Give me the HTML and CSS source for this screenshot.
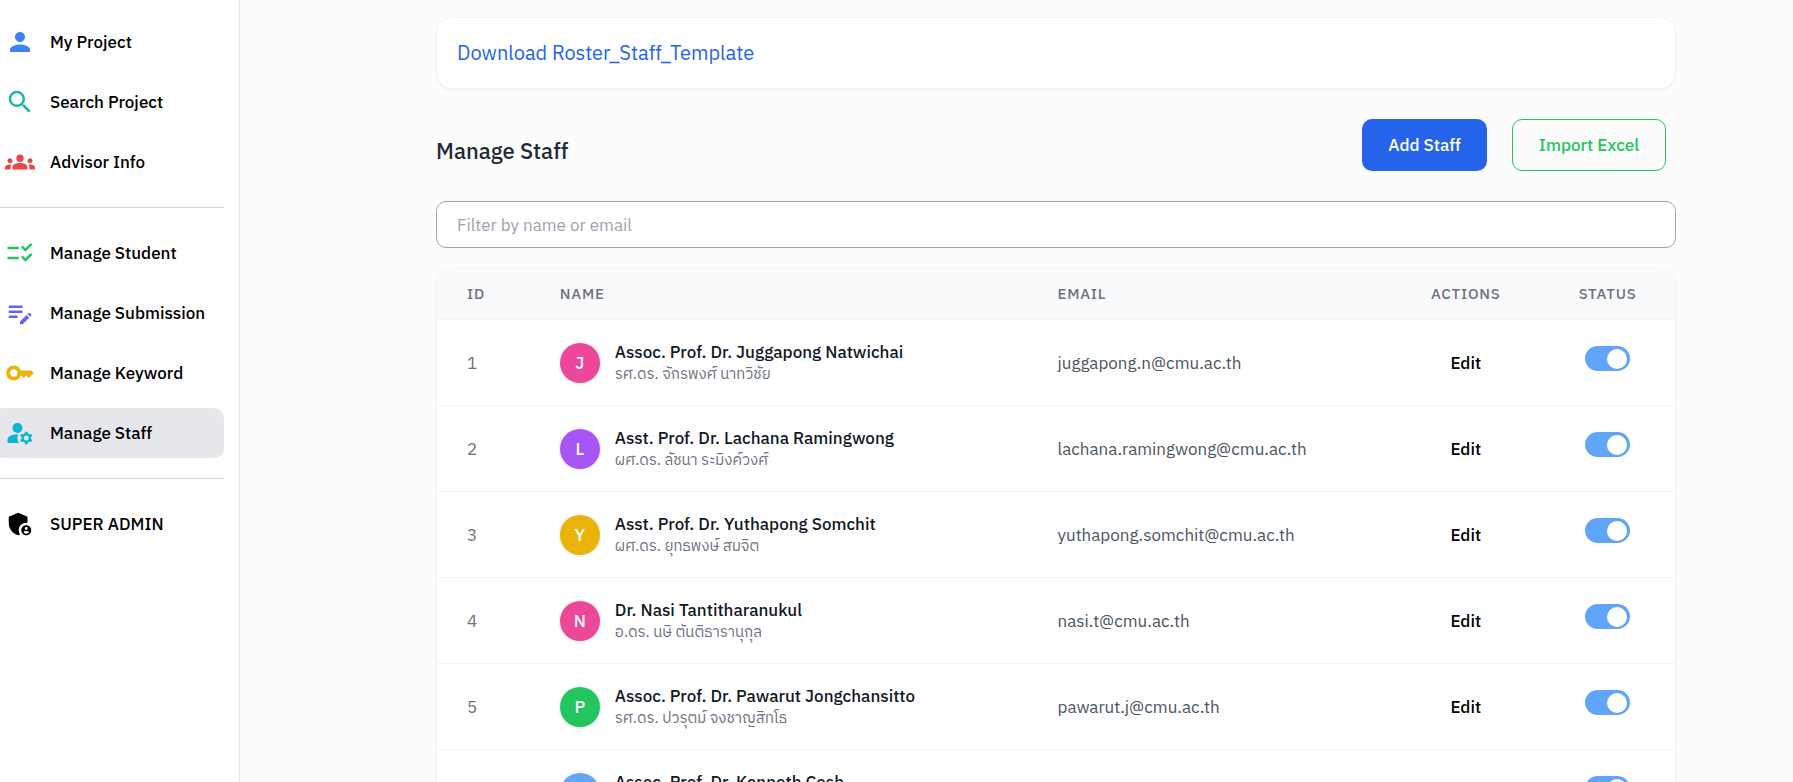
FILE: index.html
```html
<!DOCTYPE html>
<html lang="en">
<head>
<meta charset="utf-8">
<title>Manage Staff</title>
<meta name="viewport" content="width=device-width, initial-scale=1">
<link rel="stylesheet" href="styles.css">
</head>
<body>
<div class="app">
  <nav class="sidebar">
    <a class="nav-item" href="#"><svg class="icon blue" viewBox="0 0 24 24"><path d="M12 12c2.21 0 4-1.79 4-4s-1.79-4-4-4-4 1.79-4 4 1.79 4 4 4zm0 2c-2.67 0-8 1.34-8 4v2h16v-2c0-2.66-5.33-4-8-4z"/></svg>My Project</a>
    <a class="nav-item" href="#"><svg class="icon teal" viewBox="0 0 24 24"><path d="M15.5 14h-.79l-.28-.27A6.471 6.471 0 0 0 16 9.5 6.5 6.5 0 1 0 9.5 16c1.61 0 3.09-.59 4.23-1.57l.27.28v.79l5 4.99L20.49 19l-4.99-5zm-6 0C7.01 14 5 11.99 5 9.5S7.01 5 9.5 5 14 7.01 14 9.5 11.99 14 9.5 14z"/></svg>Search Project</a>
    <a class="nav-item" href="#"><svg class="icon red" viewBox="0 0 24 24"><path d="M12 12.75c1.63 0 3.07.39 4.24.9 1.08.48 1.76 1.56 1.76 2.73V18H6v-1.61c0-1.18.68-2.26 1.76-2.73 1.17-.52 2.61-.91 4.24-.91zM4 13c1.1 0 2-.9 2-2s-.9-2-2-2-2 .9-2 2 .9 2 2 2zm1.13 1.1c-.37-.06-.74-.1-1.13-.1-.99 0-1.93.21-2.78.58A2.01 2.01 0 0 0 0 16.43V18h4.5v-1.61c0-.83.23-1.61.63-2.29zM20 13c1.1 0 2-.9 2-2s-.9-2-2-2-2 .9-2 2 .9 2 2 2zm4 3.43c0-.81-.48-1.53-1.22-1.85A6.95 6.95 0 0 0 20 14c-.39 0-.76.04-1.13.1.4.68.63 1.46.63 2.29V18H24v-1.57zM12 6c1.66 0 3 1.34 3 3s-1.34 3-3 3-3-1.34-3-3 1.34-3 3-3z"/></svg>Advisor Info</a>
    <hr class="divider">
    <a class="nav-item" href="#"><svg class="icon green" viewBox="0 0 24 24"><path d="M11 7H2v2h9V7zm0 8H2v2h9v-2zM16.34 11l-3.54-3.54 1.41-1.41 2.12 2.12 4.24-4.24L22 5.34 16.34 11zm0 8l-3.54-3.54 1.41-1.41 2.12 2.12 4.24-4.24L22 13.34 16.34 19z"/></svg>Manage Student</a>
    <a class="nav-item" href="#"><svg class="icon indigo" viewBox="0 0 24 24"><path d="M3 10h11v2H3v-2zm0-2h11V6H3v2zm0 8h7v-2H3v2zm15.01-3.13.71-.71a.996.996 0 0 1 1.41 0l.71.71c.39.39.39 1.02 0 1.41l-.71.71-2.12-2.12zm-.71.71-5.3 5.3V21h2.12l5.3-5.3-2.12-2.12z"/></svg>Manage Submission</a>
    <a class="nav-item" href="#"><svg class="icon yellow" viewBox="0 0 24 24"><path d="M21 10h-8.35A5.99 5.99 0 0 0 7 6c-3.31 0-6 2.69-6 6s2.69 6 6 6a5.99 5.99 0 0 0 5.65-4H13l2 2 2-2 2 2 4-4.04L21 10zM7 15c-1.65 0-3-1.35-3-3s1.35-3 3-3 3 1.35 3 3-1.35 3-3 3z"/></svg>Manage Keyword</a>
    <a class="nav-item active" href="#" aria-current="page"><svg class="icon cyan" viewBox="0 0 24 24"><circle cx="10" cy="8" r="4"/><path d="M10.67 13.02c-.22-.01-.44-.02-.67-.02-2.42 0-4.68.67-6.61 1.82-.88.52-1.39 1.5-1.39 2.53V20h9.26a6.963 6.963 0 0 1-.59-6.98z"/><path d="M20.75 16c0-.22-.03-.42-.06-.63l1.14-1.01-1-1.73-1.45.49c-.32-.27-.68-.48-1.08-.63L18 11h-2l-.3 1.49c-.4.15-.76.36-1.08.63l-1.45-.49-1 1.73 1.14 1.01c-.03.21-.06.41-.06.63s.03.42.06.63l-1.14 1.01 1 1.73 1.45-.49c.32.27.68.48 1.08.63L16 21h2l.3-1.49c.4-.15.76-.36 1.08-.63l1.45.49 1-1.73-1.14-1.01c.03-.21.06-.41.06-.63zM17 18c-1.1 0-2-.9-2-2s.9-2 2-2 2 .9 2 2-.9 2-2 2z"/></svg>Manage Staff</a>
    <hr class="divider">
    <a class="nav-item" href="#"><svg class="icon" viewBox="0 0 24 24"><path d="M17 11c.34 0 .67.04 1 .09V6.27L10.5 3 3 6.27v4.91c0 4.54 3.2 8.79 7.5 9.82.55-.13 1.08-.32 1.6-.55A5.973 5.973 0 0 1 11 17c0-3.31 2.69-6 6-6z"/><path d="M17 13c-2.21 0-4 1.79-4 4s1.79 4 4 4 4-1.79 4-4-1.79-4-4-4zm0 1.38c.62 0 1.12.51 1.12 1.12s-.51 1.12-1.12 1.12-1.12-.51-1.12-1.12.5-1.12 1.12-1.12zm0 5.37c-.93 0-1.74-.46-2.24-1.17.05-.72 1.51-1.08 2.24-1.08s2.19.36 2.24 1.08c-.5.71-1.31 1.17-2.24 1.17z"/></svg>SUPER ADMIN</a>
  </nav>

  <main class="content">
    <section class="download-card"><a class="download-link" href="#">Download Roster_Staff_Template</a></section>

    <header class="toolbar">
      <h1 class="title">Manage Staff</h1>
      <div class="actions">
        <button class="btn btn-primary" type="button">Add Staff</button>
        <button class="btn btn-outline" type="button">Import Excel</button>
      </div>
    </header>

    <input class="filter" type="text" placeholder="Filter by name or email" aria-label="Filter by name or email">

    <div class="table-card">
      <table class="staff">
        <colgroup><col class="col-id"><col class="col-name"><col class="col-email"><col class="col-actions"><col class="col-status"></colgroup>
        <thead>
          <tr><th scope="col">ID</th><th scope="col">Name</th><th scope="col">Email</th><th scope="col" class="center">Actions</th><th scope="col" class="center">Status</th></tr>
        </thead>
        <tbody>
          <tr>
            <td class="id">1</td>
            <td><div class="person"><span class="avatar bg-pink">J</span><div><div class="name">Assoc. Prof. Dr. Juggapong Natwichai</div><div class="thai" lang="th">รศ.ดร. จักรพงศ์ นาทวิชัย</div></div></div></td>
            <td class="email">juggapong.n@cmu.ac.th</td>
            <td class="center"><button class="edit" type="button">Edit</button></td>
            <td class="center"><input class="toggle" type="checkbox" checked aria-label="Status of Juggapong Natwichai"></td>
          </tr>
          <tr>
            <td class="id">2</td>
            <td><div class="person"><span class="avatar bg-purple">L</span><div><div class="name">Asst. Prof. Dr. Lachana Ramingwong</div><div class="thai" lang="th">ผศ.ดร. ลัชนา ระมิงค์วงศ์</div></div></div></td>
            <td class="email">lachana.ramingwong@cmu.ac.th</td>
            <td class="center"><button class="edit" type="button">Edit</button></td>
            <td class="center"><input class="toggle" type="checkbox" checked aria-label="Status of Lachana Ramingwong"></td>
          </tr>
          <tr>
            <td class="id">3</td>
            <td><div class="person"><span class="avatar bg-yellow">Y</span><div><div class="name">Asst. Prof. Dr. Yuthapong Somchit</div><div class="thai" lang="th">ผศ.ดร. ยุทธพงษ์ สมจิต</div></div></div></td>
            <td class="email">yuthapong.somchit@cmu.ac.th</td>
            <td class="center"><button class="edit" type="button">Edit</button></td>
            <td class="center"><input class="toggle" type="checkbox" checked aria-label="Status of Yuthapong Somchit"></td>
          </tr>
          <tr>
            <td class="id">4</td>
            <td><div class="person"><span class="avatar bg-pink">N</span><div><div class="name">Dr. Nasi Tantitharanukul</div><div class="thai" lang="th">อ.ดร. นษิ ตันติธารานุกุล</div></div></div></td>
            <td class="email">nasi.t@cmu.ac.th</td>
            <td class="center"><button class="edit" type="button">Edit</button></td>
            <td class="center"><input class="toggle" type="checkbox" checked aria-label="Status of Nasi Tantitharanukul"></td>
          </tr>
          <tr>
            <td class="id">5</td>
            <td><div class="person"><span class="avatar bg-green">P</span><div><div class="name">Assoc. Prof. Dr. Pawarut Jongchansitto</div><div class="thai" lang="th">รศ.ดร. ปวรุตม์ จงชาญสิทโธ</div></div></div></td>
            <td class="email">pawarut.j@cmu.ac.th</td>
            <td class="center"><button class="edit" type="button">Edit</button></td>
            <td class="center"><input class="toggle" type="checkbox" checked aria-label="Status of Pawarut Jongchansitto"></td>
          </tr>
          <tr>
            <td class="id"></td>
            <td><div class="person"><span class="avatar bg-blue"></span><div><div class="name">Assoc. Prof. Dr. Kenneth Cosh</div><div class="thai" lang="th">&nbsp;</div></div></div></td>
            <td class="email"></td>
            <td class="center"></td>
            <td class="center"><input class="toggle" type="checkbox" checked aria-label="Status of Kenneth Cosh"></td>
          </tr>
        </tbody>
      </table>
    </div>
  </main>
</div>
</body>
</html>
```

FILE: styles.css
```css
* { box-sizing: border-box; }

body {
  margin: 0;
  font-family: "IBM Plex Sans", "IBM Plex Sans Thai", Roboto, "Noto Sans Thai", sans-serif;
  font-size: 17px;
  line-height: 24px;
  color: #000;
  background: #fcfcfc;
}

button, input { font: inherit; }

.app {
  display: flex;
  height: 100vh;
  overflow: hidden;
}

/* Sidebar */
.sidebar {
  flex: 0 0 246px;
  display: flex;
  flex-direction: column;
  gap: 10px;
  margin-left: -6px;
  padding: 17px 15px 0 0;
  background: #fff;
  border-right: 1px solid #e5e7eb;
}

.nav-item {
  display: flex;
  align-items: center;
  gap: 15px;
  height: 50px;
  padding-left: 11px;
  border-radius: 10px;
  color: #000;
  font-weight: 500;
  text-decoration: none;
  white-space: nowrap;
}

.nav-item.active { background: #e5e7eb; }

.divider {
  width: 100%;
  margin: 10px 0;
  border: 0;
  border-top: 1px solid #d1d5db;
}

.icon {
  flex: none;
  width: 30px;
  height: 30px;
  fill: currentColor;
}

.blue { color: #3b82f6; }
.teal { color: #14b8a6; }
.red { color: #ef4444; }
.green { color: #22c55e; }
.indigo { color: #6366f1; }
.yellow { color: #eab308; }
.cyan { color: #06b6d4; }

/* Content */
.content {
  flex: 1;
  min-width: 0;
  padding: 17px 117px 0 196px;
}

.download-card {
  display: flex;
  padding: 20px;
  border: 1px solid #f3f4f6;
  border-radius: 15px;
  background: #fff;
  box-shadow: 0 1px 2px rgba(0, 0, 0, 0.06);
}

.download-link {
  color: #2563eb;
  font-size: 20px;
  line-height: 30px;
  text-decoration: none;
}

.toolbar {
  display: flex;
  justify-content: space-between;
  align-items: flex-start;
  padding: 30px 10px 30px 0;
}

.title {
  margin: 16px 0 0;
  font-size: 22px;
  line-height: 32px;
  font-weight: 500;
  color: #1f2937;
}

.actions {
  display: flex;
  gap: 25px;
}

.btn {
  height: 52px;
  padding: 0 26px;
  border: 0;
  border-radius: 10px;
  font-weight: 500;
}

.btn-primary {
  background: #2563eb;
  color: #fff;
}

.btn-outline {
  border: 1px solid #22c55e;
  background: transparent;
  color: #22c55e;
}

.filter {
  display: block;
  width: 100%;
  height: 47px;
  padding: 0 20px;
  border: 1px solid #9ca3af;
  border-radius: 10px;
  background: #fff;
}

.filter::placeholder { color: #9ca3af; }

/* Table */
.table-card {
  margin-top: 20px;
  border: 1px solid #f3f4f6;
  border-radius: 15px;
  background: #fff;
  overflow: hidden;
  box-shadow: 0 1px 2px rgba(0, 0, 0, 0.06);
}

.staff {
  width: 100%;
  table-layout: fixed;
  border-collapse: separate;
  border-spacing: 0;
}

.col-id { width: 7.5%; }
.col-name { width: 40.2%; }
.col-email { width: 29.4%; }
.col-actions { width: 12%; }

.staff th {
  height: 51px;
  padding: 0 0 0 30px;
  border-bottom: 1px solid #f3f4f6;
  background: #f9fafb;
  color: #6b7280;
  font-size: 15px;
  font-weight: 500;
  letter-spacing: 0.05em;
  text-align: left;
  text-transform: uppercase;
}

.staff td {
  height: 86px;
  padding: 0 0 0 30px;
  border-bottom: 1px solid #f3f4f6;
}

.staff .center {
  padding: 0;
  text-align: center;
}

.id { color: #6b7280; }
.email { color: #4b5563; }

.person {
  display: flex;
  align-items: center;
  gap: 15px;
  white-space: nowrap;
}

.avatar {
  display: grid;
  place-items: center;
  flex: none;
  width: 40px;
  height: 40px;
  border-radius: 50%;
  box-shadow: 0 0 0 2px #f3f4f6;
  color: #fff;
  font-weight: 500;
}

.bg-pink { background: #ec4899; }
.bg-purple { background: #a855f7; }
.bg-yellow { background: #eab308; }
.bg-green { background: #22c55e; }
.bg-blue { background: #60a5fa; }

.name {
  color: #111827;
  font-weight: 500;
  line-height: 22px;
}

.thai {
  color: #6b7280;
  font-size: 15px;
  line-height: 22px;
}

.edit {
  padding: 0;
  border: 0;
  background: none;
  color: #000;
  font-weight: 500;
}

.toggle {
  appearance: none;
  width: 45px;
  height: 25px;
  margin: 0 0 8px;
  padding: 3px;
  border-radius: 13px;
  background: #60a5fa;
  vertical-align: middle;
}

.toggle::before {
  content: "";
  display: block;
  width: 20px;
  height: 20px;
  margin-left: auto;
  border-radius: 50%;
  background: #fff;
}
```
